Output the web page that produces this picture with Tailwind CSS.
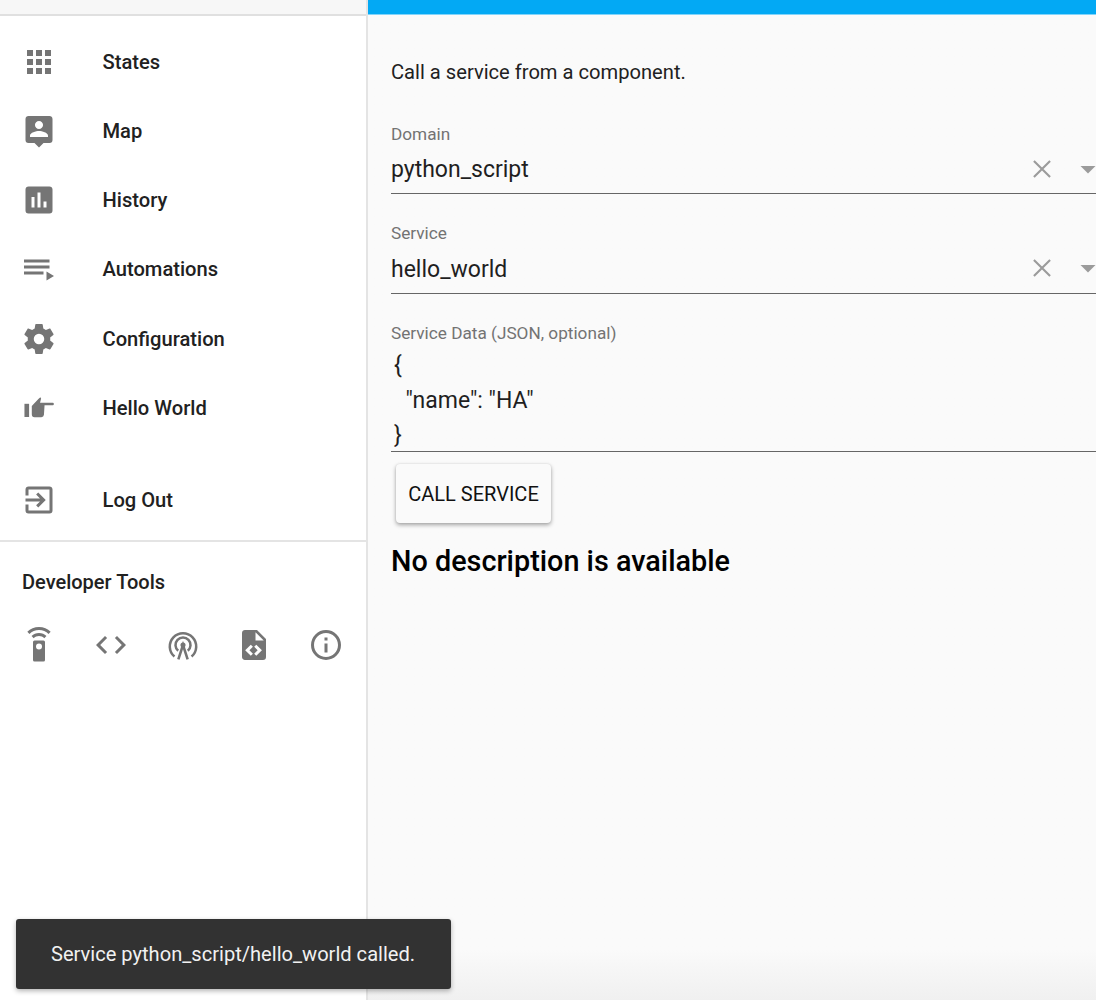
<!DOCTYPE html>
<html lang="en">
<head>
  <meta charset="UTF-8" />
  <title>Services</title>
  <script src="https://cdn.jsdelivr.net/npm/@tailwindcss/browser@4"></script>
</head>
<body class="bg-white font-['Roboto',sans-serif] text-[#212121]">
  <div class="relative flex h-[1000px] w-[1096px] overflow-hidden">
    <!-- sidebar -->
    <aside class="w-[368px] shrink-0 border-r-2 border-[#e4e4e4] bg-white">
      <div class="h-[16px] border-b-2 border-[#e0e0e0] bg-[#f7f7f7]"></div>
      <nav class="pt-[11px] text-[20.15px] font-medium">
        <div class="flex h-[69.3px] items-center">
          <svg class="ml-[20.5px] size-[36px] fill-[#757575]" viewBox="0 0 24 24"><path d="M16,20H20V16H16M16,14H20V10H16M10,8H14V4H10M16,8H20V4H16M10,14H14V10H10M4,14H8V10H4M4,20H8V16H4M10,20H14V16H10M4,8H8V4H4V8Z"/></svg>
          <span class="ml-[46px]">States</span>
        </div>
        <div class="flex h-[69.3px] items-center">
          <svg class="ml-[20.5px] size-[36px] fill-[#757575]" viewBox="0 0 24 24"><path d="M18,16H6V15.1C6,13.1 10,12 12,12C14,12 18,13.1 18,15.1V16M12,5.3C13.5,5.3 14.7,6.5 14.7,8C14.7,9.5 13.5,10.7 12,10.7C10.5,10.7 9.3,9.5 9.3,8C9.3,6.5 10.5,5.3 12,5.3M19,2H5C3.89,2 3,2.89 3,4V18A2,2 0 0,0 5,20H9L12,23L15,20H19A2,2 0 0,0 21,18V4C21,2.89 20.1,2 19,2Z"/></svg>
          <span class="ml-[46px]">Map</span>
        </div>
        <div class="flex h-[69.3px] items-center">
          <svg class="ml-[20.5px] size-[36px] fill-[#757575]" viewBox="0 0 24 24"><path d="M17,17H15V13H17M13,17H11V7H13M9,17H7V10H9M19,3H5C3.89,3 3,3.89 3,5V19A2,2 0 0,0 5,21H19A2,2 0 0,0 21,19V5C21,3.89 20.1,3 19,3Z"/></svg>
          <span class="ml-[46px]">History</span>
        </div>
        <div class="flex h-[69.3px] items-center">
          <svg class="ml-[20.5px] size-[36px] fill-[#757575]" viewBox="0 0 24 24"><path d="M19,9H2V11H19V9M19,5H2V7H19V5M2,15H15V13H2V15M17,13V19L22,16L17,13Z"/></svg>
          <span class="ml-[46px]">Automations</span>
        </div>
        <div class="flex h-[69.3px] items-center">
          <svg class="ml-[20.5px] size-[36px] fill-[#757575]" viewBox="0 0 24 24"><path d="M12,15.5A3.5,3.5 0 0,1 8.5,12A3.5,3.5 0 0,1 12,8.5A3.5,3.5 0 0,1 15.5,12A3.5,3.5 0 0,1 12,15.5M19.43,12.97C19.47,12.65 19.5,12.33 19.5,12C19.5,11.67 19.47,11.34 19.43,11L21.54,9.37C21.73,9.22 21.78,8.95 21.66,8.73L19.66,5.27C19.54,5.05 19.27,4.96 19.05,5.05L16.56,6.05C16.04,5.66 15.5,5.32 14.87,5.07L14.5,2.42C14.46,2.18 14.25,2 14,2H10C9.75,2 9.54,2.18 9.5,2.42L9.13,5.07C8.5,5.32 7.96,5.66 7.44,6.05L4.95,5.05C4.73,4.96 4.46,5.05 4.34,5.27L2.34,8.73C2.21,8.95 2.27,9.22 2.46,9.37L4.57,11C4.53,11.34 4.5,11.67 4.5,12C4.5,12.33 4.53,12.65 4.57,12.97L2.46,14.63C2.27,14.78 2.21,15.05 2.34,15.27L4.34,18.73C4.46,18.95 4.73,19.03 4.95,18.95L7.44,17.94C7.96,18.34 8.5,18.68 9.13,18.93L9.5,21.58C9.54,21.82 9.75,22 10,22H14C14.25,22 14.46,21.82 14.5,21.58L14.87,18.93C15.5,18.67 16.04,18.34 16.56,17.94L19.05,18.95C19.27,19.03 19.54,18.95 19.66,18.73L21.66,15.27C21.78,15.05 21.73,14.78 21.54,14.63L19.43,12.97Z"/></svg>
          <span class="ml-[46px]">Configuration</span>
        </div>
        <div class="flex h-[69.3px] items-center">
          <svg class="ml-[20.5px] size-[36px] fill-[#757575]" viewBox="0 0 24 24"><path d="M2.3,9.2H5.4V18H2.3Z"/><path d="M7.2,10.6L11.6,6L12.9,4.8L13.4,5.6L12.7,8.5H21.2Q21.9,8.5 21.9,9.3Q21.9,10.1 21.2,10.1H15.7L15.3,16.5Q15.1,18.1 13.6,18.1H9Q7.2,18.1 7.2,16.2Z"/></svg>
          <span class="ml-[46px]">Hello World</span>
        </div>
        <div class="mt-[23px] flex h-[69.3px] items-center">
          <svg class="ml-[20.5px] size-[36px] fill-[#757575]" viewBox="0 0 24 24"><path d="M19,3H5C3.89,3 3,3.89 3,5V9H5V5H19V19H5V15H3V19A2,2 0 0,0 5,21H19A2,2 0 0,0 21,19V5C21,3.89 20.1,3 19,3M10.08,15.58L11.5,17L16.5,12L11.5,7L10.08,8.41L12.67,11H3V13H12.67L10.08,15.58Z"/></svg>
          <span class="ml-[46px]">Log Out</span>
        </div>
      </nav>
      <div class="mt-[5px] border-t-2 border-[#e4e4e4] px-[22px] pt-[26px]">
        <p class="text-[20px] leading-[28px] font-medium">Developer Tools</p>
      </div>
      <div class="mt-[31px] flex pl-[20.5px]">
        <svg class="size-[36px] fill-[#757575]" viewBox="0 0 24 24"><path d="M12,0C8.96,0 6.21,1.23 4.22,3.22L5.63,4.63C7.26,3 9.5,2 12,2C14.5,2 16.74,3 18.36,4.64L19.77,3.23C17.79,1.23 15.04,0 12,0M7.05,6.05L8.46,7.46C9.37,6.56 10.62,6 12,6C13.38,6 14.63,6.56 15.54,7.46L16.95,6.05C15.68,4.78 13.93,4 12,4C10.07,4 8.32,4.78 7.05,6.05M12,15A2,2 0 0,1 10,13A2,2 0 0,1 12,11A2,2 0 0,1 14,13A2,2 0 0,1 12,15M15,9H9A1,1 0 0,0 8,10V22A1,1 0 0,0 9,23H15A1,1 0 0,0 16,22V10A1,1 0 0,0 15,9Z"/></svg>
        <svg class="ml-[36px] size-[36px] fill-[#757575]" viewBox="0 0 24 24"><path d="M14.6,16.6L19.2,12L14.6,7.4L16,6L22,12L16,18L14.6,16.6M9.4,16.6L4.8,12L9.4,7.4L8,6L2,12L8,18L9.4,16.6Z"/></svg>
        <svg class="ml-[36px] size-[36px] fill-none stroke-[#757575]" viewBox="0 0 24 24" stroke-width="1.7"><path d="M6.3,19.7A8.8,8.8 0 1 1 17.7,19.7"/><path d="M8.8,15.9A5,5 0 1 1 15.2,15.9"/><path d="M8.9,21.6L12,12L15.1,21.6"/><circle cx="12" cy="12" r="1.7" class="fill-[#757575]" stroke="none"/></svg>
        <svg class="ml-[35px] size-[36px] fill-[#757575]" viewBox="0 0 24 24"><path d="M13,9H18.5L13,3.5V9M6,2H14L20,8V20A2,2 0 0,1 18,22H6C4.89,22 4,21.1 4,20V4C4,2.89 4.89,2 6,2M6.12,15.5L9.86,19.24L11.28,17.83L8.95,15.5L11.28,13.17L9.86,11.76L6.12,15.5M17.28,15.5L13.54,11.76L12.12,13.17L14.45,15.5L12.12,17.83L13.54,19.24L17.28,15.5Z"/></svg>
        <svg class="ml-[36px] size-[36px] fill-[#757575]" viewBox="0 0 24 24"><path d="M11,9H13V7H11M12,20C7.59,20 4,16.41 4,12C4,7.59 7.59,4 12,4C16.41,4 20,7.59 20,12C20,16.41 16.41,20 12,20M12,2A10,10 0 0,0 2,12A10,10 0 0,0 12,22A10,10 0 0,0 22,12A10,10 0 0,0 12,2M11,17H13V11H11V17Z"/></svg>
      </div>
    </aside>

    <!-- main panel -->
    <main class="min-w-0 flex-1 bg-linear-to-b from-[#fafafa] from-95% to-[#f0f0f0]">
      <div class="h-[15px] border-b border-[#81d4fa] bg-[#03a9f4]"></div>
      <div class="pt-[42px] pl-[23px] text-[#212121]">
        <p class="text-[20.15px] leading-[30px]">Call a service from a component.</p>

        <div class="mt-[35px]">
          <label class="block text-[17.2px] leading-[24px] text-[#737373]">Domain</label>
          <div class="mt-[3px] flex h-[45px] items-center border-b-[1.5px] border-[#666] pb-[3px] text-[23px] text-[#1f1f1f]">
            <span class="pt-[2px]">python_script</span>
            <svg class="mt-[-2px] ml-auto size-[34px] shrink-0 stroke-[#9b9b9b]" viewBox="0 0 24 24" stroke-width="1.5"><path d="M6.3,6.3L17.7,17.7M17.7,6.3L6.3,17.7"/></svg>
            <svg class="mt-[-2px] mr-[-7px] ml-[14px] size-[30px] shrink-0 fill-[#9b9b9b]" viewBox="0 0 24 24"><path d="M6,9.5L12,15.5L18,9.5Z"/></svg>
          </div>
        </div>

        <div class="mt-[27px]">
          <label class="block text-[17.2px] leading-[24px] text-[#737373]">Service</label>
          <div class="mt-[4px] flex h-[45px] items-center border-b-[1.5px] border-[#666] pb-[3px] text-[23px] text-[#1f1f1f]">
            <span class="pt-[2px]">hello_world</span>
            <svg class="mt-[-4px] ml-auto size-[34px] shrink-0 stroke-[#9b9b9b]" viewBox="0 0 24 24" stroke-width="1.5"><path d="M6.3,6.3L17.7,17.7M17.7,6.3L6.3,17.7"/></svg>
            <svg class="mt-[-4px] mr-[-7px] ml-[14px] size-[30px] shrink-0 fill-[#9b9b9b]" viewBox="0 0 24 24"><path d="M6,9.5L12,15.5L18,9.5Z"/></svg>
          </div>
        </div>

        <div class="mt-[27px]">
          <label class="block text-[17.2px] leading-[24px] text-[#737373]">Service Data (JSON, optional)</label>
          <pre class="mt-[3px] h-[104px] border-b-[1.5px] border-[#666] pl-[3px] font-['Roboto',sans-serif] text-[23px] leading-[35px] text-[#1f1f1f]">{
  "name": "HA"
}</pre>
        </div>

        <button class="mt-[12px] ml-[5px] block h-[59px] w-[155px] rounded-[4px] bg-[#fafafa] text-[20px] text-[#111] shadow-[0_2px_4px_rgba(0,0,0,0.35),0_0_2px_rgba(0,0,0,0.1)]">CALL SERVICE</button>

        <h2 class="mt-[20px] text-[28.8px] leading-[36px] font-medium text-black">No description is available</h2>
      </div>
    </main>

    <!-- toast -->
    <div class="absolute top-[919px] left-[16px] flex h-[70px] w-[435px] items-center rounded-[3px] bg-[#323232] pl-[35px] text-[20.1px] text-[#f1f1f1] shadow-[0_2px_5px_rgba(0,0,0,0.3)]">Service python_script/hello_world called.</div>
  </div>
</body>
</html>
